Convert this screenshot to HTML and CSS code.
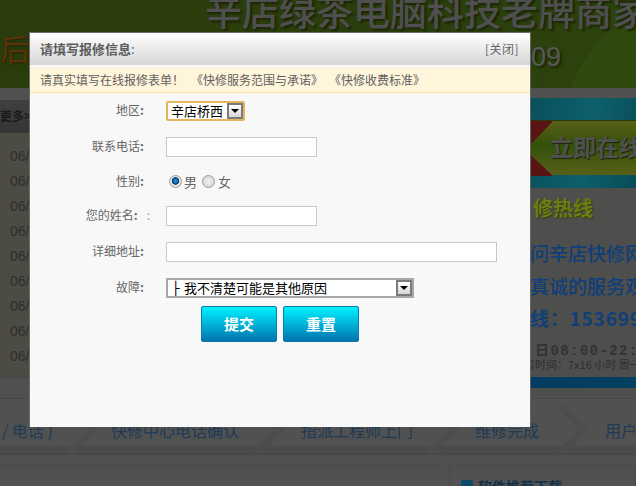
FILE: index.html
```html
<!DOCTYPE html>
<html lang="zh">
<head>
<meta charset="utf-8">
<title>请填写报修信息</title>
<link rel="stylesheet" href="styles.css">
</head>
<body>
<div class="page">
  <header class="masthead">
    <div class="brand">辛店绿茶电脑科技老牌商家</div>
    <div class="sub">
      <span class="sub-left">后</span>
      <span class="sub-right">09</span>
    </div>
  </header>
  <div class="strip"></div>
  <div class="main">
    <section class="news">
      <div class="news-head">更多&gt;</div>
      <ul class="news-list">
        <li>06/</li><li>06/</li><li>06/</li><li>06/</li><li>06/</li><li>06/</li><li>06/</li><li>06/</li><li>06/</li>
      </ul>
    </section>
    <aside class="side">
      <div class="banner">
        <div class="ribbon">
          <svg class="notch" width="23" height="55" viewBox="0 0 23 55"><path d="M0 0H23L6 18L0 24Z M0 33L6 39L23 55H0Z" fill="#5a1414"/></svg>
          <span class="ribbon-text">立即在线</span>
        </div>
      </div>
      <div class="hot">修热线</div>
      <div class="ask">
        <div>问辛店快修网</div>
        <div>真诚的服务观</div>
        <div class="ask-strong">线：153699</div>
      </div>
      <div class="hours">日08:00-22:</div>
      <div class="hours-small">务时间：7x16 小时 周一至</div>
      <div class="side-bar"></div>
    </aside>
  </div>
  <div class="steps">
    <div class="step step-a"><span>/ 电话 )</span><svg class="chev" width="34" height="47" viewBox="0 0 34 47"><path d="M6 0L30 23.500L6 47" /></svg></div>
    <div class="step step-b"><span>快修中心电话确认</span><svg class="chev" width="34" height="47" viewBox="0 0 34 47"><path d="M6 0L30 23.500L6 47" /></svg></div>
    <div class="step step-c"><span>指派工程师上门</span><svg class="chev" width="34" height="47" viewBox="0 0 34 47"><path d="M6 0L30 23.500L6 47" /></svg></div>
    <div class="step step-d"><span>维修完成</span><svg class="chev" width="34" height="47" viewBox="0 0 34 47"><path d="M6 0L30 23.500L6 47" /></svg></div>
    <div class="step step-e"><span>用户评价</span></div>
  </div>
  <div class="foot">
    <div class="foot-left"></div>
    <div class="foot-right"><i class="foot-icon"></i><span>软件推荐下载</span></div>
  </div>

  <div class="modal">
    <div class="modal-title">
      <span><b>请填写报修信息</b>:</span>
      <a class="close">[关闭]</a>
    </div>
    <div class="notice">
      <span class="notice-lead">请真实填写在线报修表单！</span>
      <span class="notice-a">《快修服务范围与承诺》</span>
      <span class="notice-b">《快修收费标准》</span>
    </div>
    <form class="form">
      <div class="row">
        <label class="label">地区<b>:</b></label>
        <div class="select select-area">
          <select><option>辛店桥西</option></select>
          <span class="arrow"></span>
        </div>
      </div>
      <div class="row row-35">
        <label class="label">联系电话<b>:</b></label>
        <input class="text text-short" type="text">
      </div>
      <div class="row row-34">
        <label class="label">性别<b>:</b></label>
        <div class="radios">
          <input class="radio" type="radio" name="sex" checked><span class="radio-text">男</span>
          <input class="radio" type="radio" name="sex"><span class="radio-text">女</span>
        </div>
      </div>
      <div class="row">
        <label class="label">您的姓名<b>:</b><span class="extra">:</span></label>
        <input class="text text-short" type="text">
      </div>
      <div class="row">
        <label class="label">详细地址<b>:</b></label>
        <input class="text text-long" type="text">
      </div>
      <div class="row row-28">
        <label class="label">故障<b>:</b></label>
        <div class="select select-fault">
          <select><option>├ 我不清楚可能是其他原因</option></select>
          <span class="arrow"></span>
        </div>
      </div>
      <div class="actions">
        <button class="btn" type="button">提交</button>
        <button class="btn" type="reset">重置</button>
      </div>
    </form>
  </div>
</div>
</body>
</html>
```

FILE: styles.css
```css
* { box-sizing: border-box; }
html, body { margin: 0; padding: 0; }
body { background: #525252; font-family: "Noto Sans CJK SC", "Liberation Sans", sans-serif; font-size: 12px; }
.page { position: relative; width: 636px; height: 486px; overflow: hidden; background: #525252; }

.masthead { height: 88px; background: radial-gradient(circle at 690px 130px, #2f4a0e 126px, rgba(47, 74, 14, 0) 127px), linear-gradient(100deg, #2a3c0b 0%, #2b3f0c 70%, #2d430d 100%); overflow: hidden; }
.brand { margin: -14px 0 0 205px; height: 48px; line-height: 48px; font-size: 37px; font-weight: 500; color: #4f4f4f; white-space: nowrap; text-shadow: 2px 2px 2px #1c2607; }
.sub { display: flex; justify-content: space-between; align-items: flex-start; height: 36px; margin-top: -5px; }
.sub-left { font-size: 30px; line-height: 36px; color: #5e3208; text-shadow: 1px 1px 2px #1c2607; }
.sub-right { margin: 10px 75px 0 0; font-family: "Liberation Sans", sans-serif; font-size: 27px; line-height: 36px; color: #585858; text-shadow: 2px 2px 2px #1c2607; }

.strip { height: 10px; background: #505050; }
.main { display: flex; height: 301px; background: #505050; border-bottom: 1px solid #474747; }

.news { width: 530px; padding-top: 2px; }
.news-head { height: 33px; padding-top: 8px; line-height: 16px; font-weight: 700; color: #1a1a1a; background: linear-gradient(#3f3f3f, #353535); white-space: nowrap; }
.news-list { list-style: none; margin: 0; padding: 11px 0 0 10px; height: 245px; background: #4c4c44; border-bottom: 1px solid #454545; }
.news-list li { height: 25px; line-height: 25px; font-family: "Liberation Sans", sans-serif; font-size: 14px; color: #2e2e2c; }

.side { width: 106px; overflow: hidden; white-space: nowrap; background: #4e4e4c; }
.banner { height: 90px; padding-top: 22px; background: linear-gradient(100deg, #08505c, #0d606a 55%, #084c58); }
.ribbon { display: flex; align-items: center; height: 55px; background: linear-gradient(#5a6018, #33500a 45%, #586018); border-top: 1px solid #2c3a08; }
.notch { flex: none; }
.ribbon-text { margin: -4px 0 0 -3px; font-size: 23px; font-weight: 700; line-height: 30px; color: #505050; text-shadow: 1px 1px 1px #1a2206; }

.hot { height: 24px; margin: 8px 0 0 3px; line-height: 24px; font-size: 20px; font-weight: 700; color: #6d7d14; text-shadow: 1px 1px 1px #35400a; }
.ask { margin-top: 17px; font-size: 19px; font-weight: 500; color: #0f3f78; }
.ask div { height: 32.500px; line-height: 32.500px; }
.ask .ask-strong { font-weight: 700; letter-spacing: .8px; }
.hours { height: 16px; margin: 8px 0 0 5px; line-height: 16px; font-family: "Liberation Mono", "Noto Sans CJK SC", monospace; font-size: 14px; font-weight: 700; letter-spacing: 1.400px; color: #333; }
.hours-small { height: 10px; margin-left: -6px; line-height: 10px; font-size: 11px; color: #2f2f2f; }
.side-bar { height: 11px; margin-top: 8px; background: linear-gradient(90deg, #023c62, #04405f); }

.steps { display: flex; height: 55px; padding-top: 7px; background: #515151; border-bottom: 8px solid #4a4a4a; }
.step { display: flex; justify-content: space-between; height: 47px; font-size: 16px; color: #1e3a55; white-space: nowrap; }
.step span { line-height: 47px; height: 47px; margin-top: 1px; }
.chev { flex: none; }
.chev path { fill: none; stroke: #4d4d4d; stroke-width: 7; }
.step-a { width: 97px; padding-left: 2px; }
.step-b { width: 187px; padding-left: 14px; }
.step-c { width: 174px; padding-left: 17px; }
.step-d { width: 130px; padding-left: 17px; }
.step-e { width: 48px; padding-left: 17px; }

.foot { display: flex; height: 24px; padding-top: 10px; border-top: 1px solid #474747; background: #505050; }
.foot-left { width: 442px; border-top: 1px solid #484848; }
.foot-right { display: flex; align-items: flex-start; margin-left: 7px; padding: 11px 0 0 11px; flex: 1; height: 30px; border: 1px solid #484848; border-bottom: 0; font-size: 14px; font-weight: 700; line-height: 18px; color: #143048; }
.foot-icon { width: 12px; height: 12px; margin: 3px 5px 0 0; border-radius: 2px; background: #0f4a6a; }

.modal { position: absolute; left: 29px; top: 32px; width: 502px; height: 395px; background: #f8f8f8; border: 1px solid #6f6f6f; border-bottom: 0; border-right-color: #666; color: #666; }
.modal-title { display: flex; justify-content: space-between; align-items: center; height: 32px; padding: 0 11px 0 10px; background: linear-gradient(#fff, #d6d6d6); line-height: 28px; font-size: 13px; color: #5c5c5c; }
.close { font-size: 12px; letter-spacing: .5px; color: #666; }
.notice { display: flex; height: 26px; margin-top: 2px; border-top: 1px solid #f2f2e6; border-bottom: 1px solid #fde5a6; background: #fff5db; padding-left: 10px; line-height: 24px; color: #5f5f5f; white-space: nowrap; }
.notice-lead { width: 151px; }
.notice-a { width: 138px; }

.form { padding-top: 8px; }
.row { display: flex; align-items: flex-start; height: 36px; }
.row-35 { height: 35px; }
.row-34 { height: 34px; }
.row-28 { height: 28px; }
.label { width: 114px; height: 20px; margin: -1px 22px 0 0; line-height: 20px; text-align: right; color: #666; white-space: nowrap; }
.label b { font-weight: 700; }
.extra { margin-right: -6px; margin-left: 9px; color: #999; }

.text { height: 20px; padding: 0 4px; border: 1px solid #c8c8c8; background: #fff; outline: 0; }
.text-short { width: 151px; }
.text-long { width: 331px; }

.select { position: relative; height: 20px; }
.select select { display: block; width: 100%; height: 100%; padding: 0 0 0 5px; border: 1px solid #a8a8a8; border-radius: 0; background: #fff; appearance: none; outline: 0; font: 13px/18px "DejaVu Sans", "Noto Sans CJK SC", sans-serif; color: #000; }
.select-area { width: 79px; }
.select-area select { border: 2px solid #e4b55f; border-radius: 2px; padding-left: 3px; }
.select-fault { width: 248px; }
.select-fault select { border-width: 2px; padding-left: 4px; }
.arrow { position: absolute; top: 2px; right: 2px; width: 16px; height: 16px; border: 2px solid #7a7a7a; background: linear-gradient(#fff, #d6d6d6); pointer-events: none; }
.arrow::after { content: ""; position: absolute; left: 2px; top: 4px; border-style: solid; border-width: 4px 4px 0; border-color: #000 transparent transparent; }

.radios { display: flex; align-items: center; height: 20px; margin-top: -1px; }
.radio { appearance: none; flex: none; width: 13px; height: 13px; margin: 0 0 0 3px; border: 1px solid #9a9a9a; border-radius: 50%; background: radial-gradient(circle, #f2f2f2, #cfcfcf); }
.radio:checked { background: radial-gradient(circle at 50% 45%, #3aa0e0 0, #0a5a9c 32%, #083a66 42%, #e8e8e8 50%, #dcdcdc 100%); }
.radio-text { margin: 2px 2px 0 2px; font-size: 13px; line-height: 18px; color: #666; }
.radio-text:last-child { margin-left: 3px; }

.actions { display: flex; gap: 6px; padding-left: 171px; }
.btn { width: 76px; height: 36px; padding: 0; border: 1px solid #0a7ba6; border-radius: 2px; background: linear-gradient(#00f2ff, #0074ae); font: 700 15px/34px "Noto Sans CJK SC", sans-serif; color: #fff; }
```
